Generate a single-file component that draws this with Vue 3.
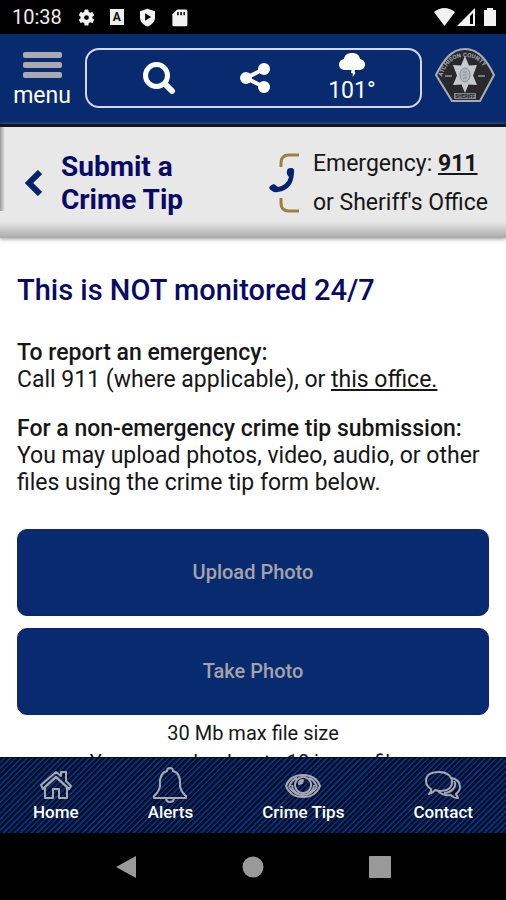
<!-- src/App.vue -->
<template>
    <div class="app">
        <div class="status-bar">
            <span class="clock">10:38</span>
            <svg class="status-icon" viewBox="0 0 24 24" aria-hidden="true">
                <path fill-rule="evenodd" d="M19.4 13a7.500 7.500 0 0 0 0-2l2.100-1.650a.5.5 0 0 0 .12-.64l-2-3.460a.5.5 0 0 0-.61-.22l-2.490 1a7.300 7.300 0 0 0-1.690-.98l-.38-2.650A.49.49 0 0 0 14 2h-4a.49.49 0 0 0-.49.420l-.38 2.650c-.61.250-1.170.590-1.690.980l-2.490-1a.49.49 0 0 0-.61.220l-2 3.460a.49.49 0 0 0 .12.640L4.570 11a8 8 0 0 0 0 2l-2.110 1.650a.5.5 0 0 0-.12.640l2 3.460c.12.220.390.300.610.220l2.490-1c.52.400 1.080.730 1.690.980l.38 2.650c.03.240.240.420.490.420h4c.25 0 .46-.18.490-.42l.38-2.650c.61-.25 1.170-.59 1.690-.98l2.490 1c.23.080.490 0 .61-.22l2-3.460a.5.5 0 0 0-.12-.64L19.400 13zM12 15a3 3 0 1 1 0-6 3 3 0 0 1 0 6z" />
            </svg>
            <span class="letter-badge" aria-hidden="true">A</span>
            <svg class="status-icon" viewBox="0 0 24 24" aria-hidden="true">
                <path fill-rule="evenodd" d="M12 1 21.500 4v8c0 5-4 9.500-9.500 11.500C6.500 21.500 2.500 17 2.500 12V4zM9 6.500v9.500l7.500-4.700z" />
            </svg>
            <svg class="status-icon" viewBox="0 0 24 24" aria-hidden="true">
                <path fill-rule="evenodd" d="M9 2h11a2 2 0 0 1 2 2v17a2 2 0 0 1-2 2H5a2 2 0 0 1-2-2V8zM9 5v4h2V5zm4 0v4h2V5zm4 0v4h2V5z" />
            </svg>
            <span class="spacer"></span>
            <svg class="status-icon signal" viewBox="0 0 64 20" aria-hidden="true">
                <path d="M0 5Q10.500-3 21 5L10.500 19z" />
                <path fill-rule="evenodd" d="M23 19 41 1v18zM36 9v8h3V6z" />
                <path d="M50 3h3V1h6v2h3v16H50z" />
            </svg>
        </div>

        <header class="header">
            <button class="menu-btn" type="button">
                <span class="bars"><i></i><i></i><i></i></span>
                <span>menu</span>
            </button>

            <div class="toolbar">
                <button type="button" aria-label="Search">
                    <svg width="34" height="34" viewBox="0 0 34 34" fill="none" stroke="#fff">
                        <circle cx="14.500" cy="14.500" r="11" stroke-width="5" />
                        <path d="m23 23 7 7" stroke-width="6" stroke-linecap="round" />
                    </svg>
                </button>
                <button type="button" aria-label="Share">
                    <svg width="30" height="30" viewBox="0 0 30 30" fill="#fff">
                        <path d="M24 6 6 15l18 9" fill="none" stroke="#fff" stroke-width="4" />
                        <circle cx="24" cy="6" r="6" />
                        <circle cx="6" cy="15" r="6" />
                        <circle cx="24" cy="24" r="6" />
                    </svg>
                </button>
                <button class="weather" type="button">
                    <svg width="28" height="25" viewBox="0 0 28 25" fill="#fff">
                        <path d="M7 18C3 18 1 15.500 1 12.500S3 7.500 6 7C6.500 3 9.500 1 14 1s7.500 2 8 6c3 .5 5 2.500 5 5.500S25 18 21 18h-4l-.5 2 1 1-3 4 .5-3.500-2-.5.5-3z" />
                    </svg>
                    <span>101°</span>
                </button>
            </div>

            <svg class="badge" viewBox="0 0 60 54" role="img" aria-label="Sheriff">
                <defs>
                    <path id="arc" d="M7 29Q13 9 30 9t23 20" />
                </defs>
                <path d="M1 27C8 13 16 1 30 1s22 12 29 26L45 53H17z" fill="#29282d" stroke="#a8adb5" stroke-width="2" />
                <text class="badge-text"><textPath href="#arc">ATCHISON COUNTY</textPath></text>
                <path d="M10 28h7M43 28h7" stroke="#777b80" stroke-width="2" />
                <path d="m30 8 4 9.500 8-.5-4 10.500 4 9.500-8.500-.5L30 45l-3.500-8.500L18 37l4-9.500L18 17l8 .5z" fill="#c5cace" />
                <ellipse cx="30" cy="27" rx="5" ry="7" fill="#b4babf" stroke="#858b90" />
                <path d="M28 24h4M28 27h4M28 30h4" stroke="#8a9197" />
                <path d="M19 45h22v6H19z" fill="#85888c" />
                <text class="badge-text dark" x="30" y="50" text-anchor="middle">SHERIFF</text>
            </svg>
        </header>

        <section class="title-bar">
            <button class="back-btn" type="button" aria-label="Back">
                <svg width="17" height="26" viewBox="0 0 17 26" fill="none" stroke="#06216d" stroke-width="6">
                    <path d="M15 2 4 13l11 11" />
                </svg>
            </button>
            <h1>Submit a<br>Crime Tip</h1>
            <svg class="phone" width="32" height="60" viewBox="0 0 32 60" fill="none">
                <path d="M30 2H20q-8 0-8 8v4M12 45v5q0 8 8 8h10" stroke="#9b8043" stroke-width="3" />
                <path d="M18 18q0-3 4-3 4 0 3 5-1 17-16 19-6 1-9-4 1-3 5-4l4 3q9-2 11-10-3-3-2-6z" fill="#06216d" />
            </svg>
            <div class="contact-lines">
                <div>Emergency: <a href="tel:911"><b>911</b></a></div>
                <div>or Sheriff's Office</div>
            </div>
        </section>

        <main class="content">
            <h2>This is NOT monitored 24/7</h2>
            <p><b>To report an emergency:</b><br>Call 911 (where applicable), or <a href="#">this office.</a></p>
            <p><b>For a non-emergency crime tip submission:</b><br>You may upload photos, video, audio, or other files using the crime tip form below.</p>
            <div class="uploads">
                <button type="button">Upload Photo</button>
                <button type="button">Take Photo</button>
            </div>
            <div class="hint">30 Mb max file size<br>You may upload up to 10 image files.</div>
        </main>

        <nav class="tab-bar">
            <a v-for="tab in tabs" :key="tab.label" href="#">
                <svg width="36" height="36" viewBox="0 0 36 36">
                    <path v-for="d in tab.paths" :key="d" :d="d" />
                </svg>
                <span>{{ tab.label }}</span>
            </a>
        </nav>

        <div class="system-nav">
            <button type="button" aria-label="Back">
                <svg width="22" height="24" viewBox="0 0 22 24"><path d="M1 12 21 1v22z" /></svg>
            </button>
            <button type="button" aria-label="Home">
                <svg width="22" height="24" viewBox="0 0 22 24"><circle cx="11" cy="12" r="10.500" /></svg>
            </button>
            <button type="button" aria-label="Recent apps">
                <svg width="22" height="24" viewBox="0 0 22 24"><rect y="1" width="22" height="22" rx="1" /></svg>
            </button>
        </div>
    </div>
</template>

<script setup>
// bottom tabs, icons are drawn as outlines
const tabs = [
    {
        label: 'Home',
        paths: [
            'M3 18 18 5l5 4V5h5v9l5 5-2 3-13-12L5 22z',
            'M7 21v10h8v-9h6v9h8V21M7 20 18 10l11 10'
        ]
    },
    {
        label: 'Alerts',
        paths: [
            'M2 29q5-4 6-10Q7 6 15 4q0-3 3-3t3 3q8 2 7 15 1 6 6 10v2H2z',
            'M14 31q0 4 4 4t4-4'
        ]
    },
    {
        label: 'Crime Tips',
        paths: [
            'M1 19C4 11 10 8 18 8s14 3 17 11C32 27 26 30 18 30S4 27 1 19z',
            'M4 20c2-6 5-8 8-9M32 20c-2-6-5-8-8-9M4 20c4 6 8 8 14 8s10-2 14-8',
            'M18 10a8 8 0 1 0 .1 0',
            'M7 18c0 4 3 8 7 9M29 18c0 4-3 8-7 9',
            'M14 17q0-4 4-4l-1 3z'
        ]
    },
    {
        label: 'Contact',
        paths: [
            'M4 27q3-2 2-5-5-3-5-8C1 8 6 5 14 5s13 4 13 10-5 9-13 9l-4-1q-2 3-6 4z',
            'M27 11q8 2 8 9 0 4-4 7l2 4q-5 0-7-3-8 1-13-4M29 14q3 4-1 8-4 4-9 4'
        ]
    }
]
</script>

<style>
body {
    margin: 0;
}
</style>

<style scoped>
.app {
    display: flex;
    flex-direction: column;
    height: 100vh;
    overflow: hidden;
    background: #fff;
    color: #161616;
    font-family: Roboto, "Liberation Sans", sans-serif;
}

button {
    padding: 0;
    border: none;
    background: none;
    color: inherit;
    font: inherit;
    cursor: pointer;
}

svg {
    display: block;
}

a {
    color: inherit;
}

.status-bar {
    display: flex;
    flex: none;
    align-items: center;
    height: 34px;
    padding: 0 8px 0 12px;
    gap: 13px;
    background: #000;
    color: #eee;
}

.clock {
    margin-right: 2px;
    font-size: 20px;
}

.status-icon {
    width: 19px;
    height: 19px;
    fill: #f2f2f2;
}

.status-icon.signal {
    width: 64px;
    height: 20px;
}

.letter-badge {
    width: 14px;
    margin: 0 1px;
    background: #eee;
    color: #111;
    font-size: 12px;
    font-weight: 700;
    line-height: 16px;
    text-align: center;
}

.spacer {
    flex: 1;
}

.header {
    display: flex;
    flex: none;
    align-items: flex-start;
    height: 90px;
    padding: 14px 11px 0 13px;
    box-sizing: border-box;
    background: #082b70;
    color: #fff;
}

.menu-btn {
    width: 58px;
    margin-right: 14px;
    padding-top: 4px;
    font-size: 23px;
    line-height: 28px;
}

.bars {
    display: grid;
    gap: 4px;
    width: 39px;
    margin: 0 auto 4px;
}

.bars i {
    height: 6px;
    border-radius: 2px;
    background: #aaa9b0;
}

.toolbar {
    display: grid;
    flex: 1;
    grid-template-columns: repeat(3, 1fr);
    align-items: center;
    height: 60px;
    margin-right: 13px;
    padding: 0 20px 0 24px;
    box-sizing: border-box;
    border: 2px solid #d8d5f0;
    border-radius: 14px;
}

.toolbar svg {
    margin: 0 auto;
}

.weather {
    font-size: 23px;
    line-height: 28px;
}

.badge {
    width: 60px;
    height: 54px;
}

.badge-text {
    fill: #a5a8ad;
    font-size: 6px;
    font-weight: 700;
}

.badge-text.dark {
    fill: #222;
    font-size: 5px;
}

.title-bar {
    display: flex;
    flex: none;
    align-items: center;
    height: 114px;
    padding: 0 18px 0 25px;
    box-sizing: border-box;
    border-top: 3px solid #17131c;
    background:
        linear-gradient(to right, #999, transparent) 0 0 / 5px 84px no-repeat,
        linear-gradient(#e8e8e8 85%, #aaa);
    box-shadow: 0 1px 4px #999;
}

.back-btn {
    margin-right: 19px;
}

h1 {
    margin: 0;
    color: #080a66;
    font-size: 28px;
    font-weight: 700;
    line-height: 33px;
}

.phone {
    margin: 0 12px 0 auto;
}

.contact-lines {
    font-size: 23px;
    line-height: 39px;
}

.contact-lines b {
    font-weight: 700;
}

.content {
    flex: 1;
    min-height: 0;
    padding: 36px 17px 0;
    overflow: hidden;
    font-size: 23px;
    line-height: 27px;
}

h2 {
    margin: 0 0 33px;
    color: #080a66;
    font-size: 29px;
    font-weight: 500;
    line-height: 32px;
}

p {
    margin: 0 0 22px;
}

b {
    font-weight: 500;
}

.uploads {
    display: grid;
    gap: 12px;
    padding-top: 11px;
}

.uploads button {
    height: 87px;
    border: 1px solid #16206e;
    border-radius: 10px;
    background: #082b70;
    color: #a5a3aa;
    font-size: 20px;
    font-weight: 500;
}

.hint {
    padding-top: 4px;
    font-size: 20px;
    line-height: 29px;
    text-align: center;
}

.tab-bar {
    display: flex;
    flex: none;
    justify-content: space-between;
    height: 76px;
    padding: 9px 33px 0;
    box-sizing: border-box;
    border-top: 1px solid #050c26;
    background: repeating-linear-gradient(135deg, #020e32 0 2px, #0b3472 3px 4px);
    color: #fff;
}

.tab-bar a {
    display: flex;
    flex-direction: column;
    align-items: center;
    font-size: 17px;
    font-weight: 500;
    line-height: 18px;
    text-decoration: none;
}

.tab-bar svg {
    fill: none;
    stroke: #aaa7ae;
    stroke-width: 2;
    stroke-linejoin: round;
}

.system-nav {
    display: flex;
    flex: none;
    align-items: center;
    justify-content: space-around;
    height: 67px;
    padding: 0 62px;
    background: #000;
}

.system-nav svg {
    fill: #999;
}
</style>
